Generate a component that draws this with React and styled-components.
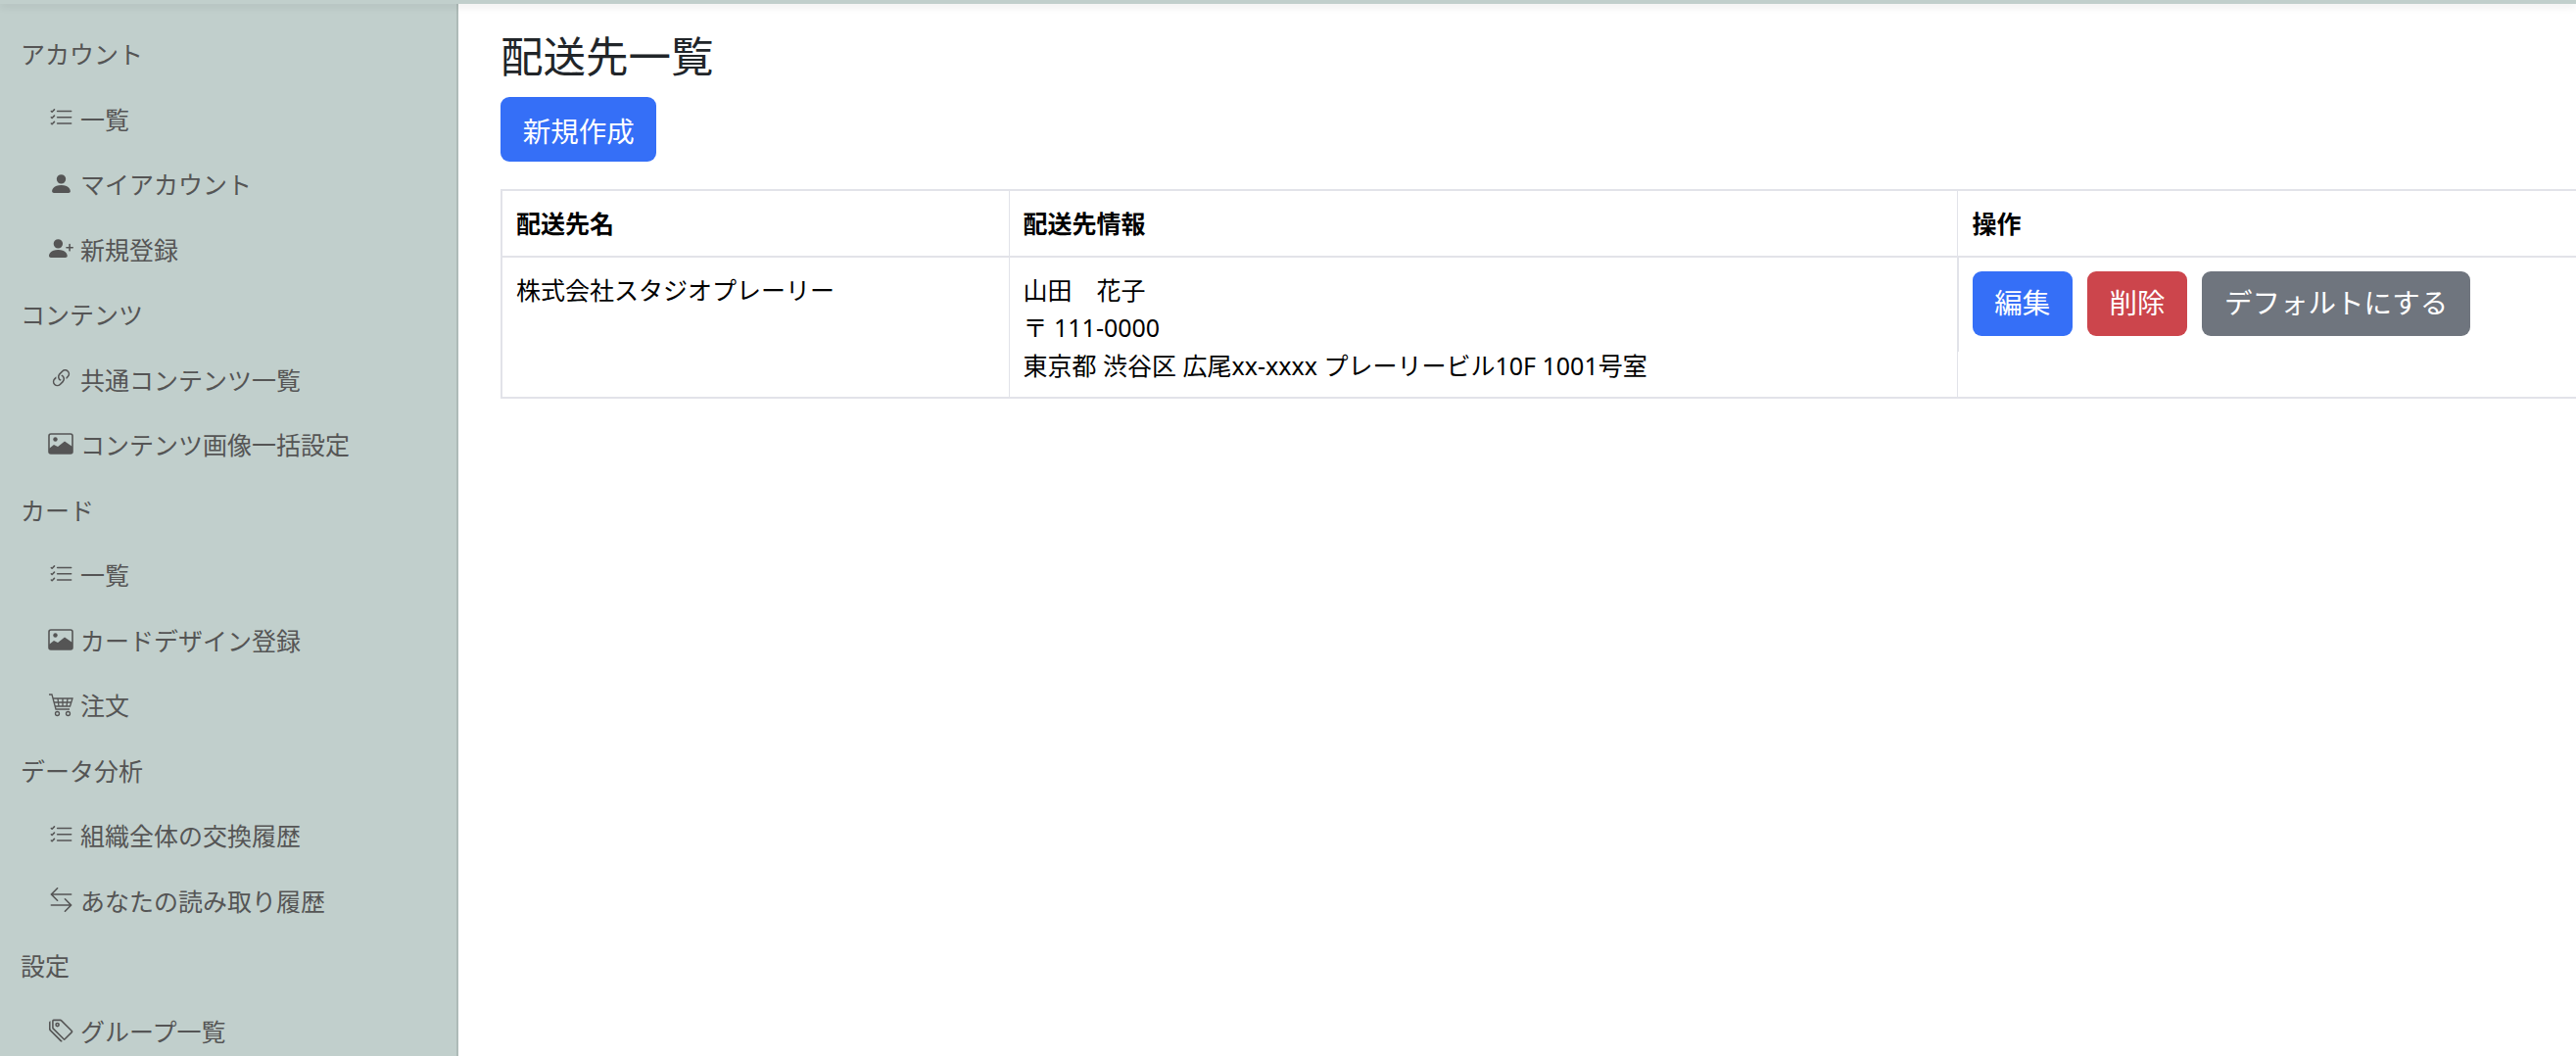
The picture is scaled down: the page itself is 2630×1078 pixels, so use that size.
import React from 'react';
import styled, { createGlobalStyle } from 'styled-components';
import {
  BsListCheck,
  BsPersonFill,
  BsPersonPlusFill,
  BsLink45Deg,
  BsArrowLeftRight,
  BsTags,
} from 'react-icons/bs';

const GlobalStyle = createGlobalStyle`
  html, body {
    margin: 0;
    height: 100%;
    overflow: hidden;
    background: #fff;
  }
  body {
    font-family: "Noto Sans", "Noto Sans CJK JP", sans-serif;
    font-size: 25px;
    color: #000;
  }
`;

const Page = styled.div`
  display: flex;
  flex-direction: column;
  height: 1078px;
  overflow: hidden;
`;

const TopBar = styled.div`
  height: 4px;
  flex: none;
  background: #c1cfcc;
  box-shadow: 0 2px 8px rgba(0, 0, 0, 0.12);
  position: relative;
  z-index: 2;
`;

const Body = styled.div`
  display: flex;
  flex: 1;
  min-height: 0;
`;

const Sidebar = styled.nav`
  width: 468px;
  flex: none;
  box-sizing: border-box;
  padding-top: 17px;
  background: #c1cfcc;
  border-right: 2px solid #aebbb8;
  color: #555;
  overflow: hidden;
`;

const SideHeading = styled.div`
  display: flex;
  align-items: center;
  height: 66.5px;
  padding-left: 21px;
`;

const SideLink = styled.div`
  display: flex;
  align-items: center;
  height: 66.5px;
  padding-left: 49px;
  gap: 7px;
`;

const IconBox = styled.span`
  width: 26px;
  display: flex;
  justify-content: center;
  align-items: center;
  flex: none;
  font-size: 25px;
`;

const Main = styled.main`
  flex: 1;
  min-width: 0;
  padding-left: 43px;
  overflow: hidden;
`;

const Title = styled.h1`
  margin: 23px 0 12px;
  font-size: 43.5px;
  line-height: 60px;
  font-weight: 400;
  color: #212529;
`;

const Button = styled.button`
  display: block;
  height: 66px;
  padding: 0 22.7px;
  border: 0;
  border-radius: 9px;
  font: inherit;
  font-size: 28.5px;
  color: #fff;
  background: ${(p) => p.$bg};
`;

const Table = styled.table`
  width: 2300px;
  margin-top: 28px;
  table-layout: fixed;
  border-collapse: collapse;
  line-height: 38.5px;

  th, td {
    border-style: solid;
    border-color: #e2e3e9;
    border-width: 2px 1px;
    padding: 14px 14px 13px;
    text-align: left;
    vertical-align: top;
  }
  th {
    font-weight: 700;
    padding: 14px 14px 13px;
  }
  th:first-child, td:first-child {
    border-left-width: 2px;
  }
  th:last-child, td:last-child {
    padding-left: 15px;
  }
`;

/* the action cell's left rule is doubled for the height of the button row */
const ActionCell = styled.td`
  position: relative;

  &::before {
    content: "";
    position: absolute;
    left: -1px;
    top: 0;
    width: 2px;
    height: 96px;
    background: #e2e3e9;
  }
`;

const Actions = styled.div`
  display: flex;
  gap: 15px;
`;

const ImageIcon = () => (
  <svg width="26" height="22" viewBox="0 0 26 22" fill="none">
    <rect x="1" y="1" width="24" height="20" rx="2" stroke="currentColor" strokeWidth="1.6" />
    <circle cx="7.5" cy="6.5" r="2.2" fill="currentColor" />
    <path d="M1 20 V16 L6 12 L10 14 L17 8.5 L25 14 V20 a1 1 0 0 1 -1 1 H2 a1 1 0 0 1 -1 -1 Z" fill="currentColor" />
  </svg>
);

const CartIcon = () => (
  <svg width="26" height="25" viewBox="0 0 26 25" fill="none" stroke="currentColor" strokeWidth="1.3">
    <path d="M1 2 H4 L8 17 H22" />
    <path d="M5 6 H25 L22.5 14 H7" />
    <path d="M10 6 L11 14 M15 6 V14 M20 6 L19 14 M6 10 H24" />
    <circle cx="9.5" cy="21.5" r="2" />
    <circle cx="20.5" cy="21.5" r="2" />
  </svg>
);

const nav = [
  { heading: 'アカウント' },
  { icon: <BsListCheck />, label: '一覧' },
  { icon: <BsPersonFill />, label: 'マイアカウント' },
  { icon: <BsPersonPlusFill />, label: '新規登録' },
  { heading: 'コンテンツ' },
  { icon: <BsLink45Deg />, label: '共通コンテンツ一覧' },
  { icon: <ImageIcon />, label: 'コンテンツ画像一括設定' },
  { heading: 'カード' },
  { icon: <BsListCheck />, label: '一覧' },
  { icon: <ImageIcon />, label: 'カードデザイン登録' },
  { icon: <CartIcon />, label: '注文' },
  { heading: 'データ分析' },
  { icon: <BsListCheck />, label: '組織全体の交換履歴' },
  { icon: <BsArrowLeftRight />, label: 'あなたの読み取り履歴' },
  { heading: '設定' },
  { icon: <BsTags />, label: 'グループ一覧' },
];

export default function App() {
  return (
    <>
      <GlobalStyle />
      <Page>
        <TopBar />
        <Body>
          <Sidebar>
            {nav.map((item, i) =>
              item.heading ? (
                <SideHeading key={i}>{item.heading}</SideHeading>
              ) : (
                <SideLink key={i}>
                  <IconBox>{item.icon}</IconBox>
                  {item.label}
                </SideLink>
              )
            )}
          </Sidebar>
          <Main>
            <Title>配送先一覧</Title>
            <Button $bg="#356ff7">新規作成</Button>
            <Table>
              <colgroup>
                <col style={{ width: 518 }} />
                <col style={{ width: 968 }} />
                <col />
              </colgroup>
              <thead>
                <tr>
                  <th>配送先名</th>
                  <th>配送先情報</th>
                  <th>操作</th>
                </tr>
              </thead>
              <tbody>
                <tr>
                  <td>株式会社スタジオプレーリー</td>
                  <td>
                    山田　花子
                    <br />〒 111-0000
                    <br />東京都 渋谷区 広尾xx-xxxx プレーリービル10F 1001号室
                  </td>
                  <ActionCell>
                    <Actions>
                      <Button $bg="#356ff7">編集</Button>
                      <Button $bg="#cc454c">削除</Button>
                      <Button $bg="#6f757e">デフォルトにする</Button>
                    </Actions>
                  </ActionCell>
                </tr>
              </tbody>
            </Table>
          </Main>
        </Body>
      </Page>
    </>
  );
}
